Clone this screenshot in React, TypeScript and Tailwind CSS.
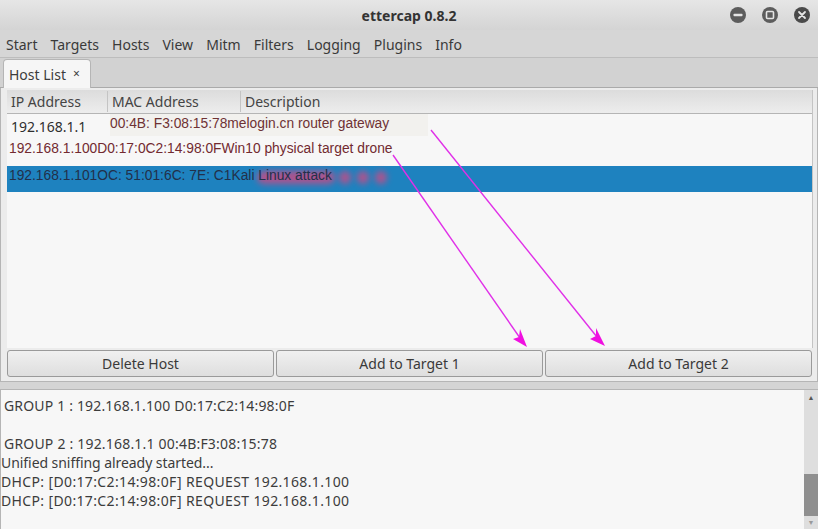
const MENU = ['Start', 'Targets', 'Hosts', 'View', 'Mitm', 'Filters', 'Logging', 'Plugins', 'Info'];

const LOG = [
  { text: 'GROUP 1 : 192.168.1.100 D0:17:C2:14:98:0F', cls: 'pl-[3px] tracking-[0.17px]' },
  { text: '', cls: '' },
  { text: 'GROUP 2 : 192.168.1.1 00:4B:F3:08:15:78', cls: 'pl-[3px] tracking-[0.2px]' },
  { text: 'Unified sniffing already started...', cls: 'tracking-[-0.06px]' },
  { text: 'DHCP: [D0:17:C2:14:98:0F] REQUEST 192.168.1.100', cls: 'tracking-[0.36px]' },
  { text: 'DHCP: [D0:17:C2:14:98:0F] REQUEST 192.168.1.100', cls: 'tracking-[0.36px]' },
];

function WinButton({ kind }: { kind: 'min' | 'max' | 'close' }) {
  return (
    <svg width="16" height="16" viewBox="0 0 16 16">
      <circle cx="8" cy="8" r="8" fill={kind === 'close' ? '#4a4a4a' : '#5c5c5c'} />
      {kind === 'min' && <rect x="3.5" y="6.8" width="9" height="2.4" rx="0.8" fill="#e4e4e4" />}
      {kind === 'max' && <rect x="4.5" y="4.5" width="7" height="7" rx="1" fill="none" stroke="#e4e4e4" strokeWidth="1.6" />}
      {kind === 'close' && <path d="M5 5l6 6M11 5l-6 6" stroke="#e4e4e4" strokeWidth="1.8" strokeLinecap="round" />}
    </svg>
  );
}

function ActionButton({ label }: { label: string }) {
  return (
    <button className="flex-1 h-[27px] rounded-[3px] border border-[#9a9a9a] bg-gradient-to-b from-[#f0f0f0] to-[#dedede] text-[14px] text-[#3a3a3a]">
      {label}
    </button>
  );
}

function Arrows() {
  return (
    <svg className="absolute inset-0 pointer-events-none" width="818" height="529" viewBox="0 0 818 529">
      <line x1="393" y1="155" x2="520" y2="338" stroke="#e030e8" strokeWidth="1.4" />
      <line x1="431" y1="130" x2="597" y2="337" stroke="#e030e8" strokeWidth="1.4" />
      <path d="M527 347L513 339L519 337L520 329Z" fill="#f010e0" />
      <path d="M605 346L590 339L596 336L596 328Z" fill="#f010e0" />
    </svg>
  );
}

export default function App() {
  return (
    <div
      className="relative w-[818px] h-[529px] overflow-hidden flex flex-col bg-[#d6d6d6] text-[#3c3c3c]"
      style={{ fontFamily: '"Noto Sans", sans-serif' }}
    >
      {/* Title bar */}
      <div className="h-[30px] flex items-center justify-end gap-4 pr-[8px] bg-gradient-to-b from-[#e6e6e6] to-[#d4d4d4] relative flex-shrink-0">
        <span className="absolute left-0 right-0 text-center text-[14px] font-bold text-[#333333]">ettercap 0.8.2</span>
        <WinButton kind="min" />
        <WinButton kind="max" />
        <WinButton kind="close" />
      </div>

      {/* Menu */}
      <div className="h-[28px] flex items-center gap-[13.1px] pl-[6px] pt-[2px] text-[14px] text-[#3a3a3a] border-b border-[#bdbdbd] bg-[#d6d6d6] flex-shrink-0">
        {MENU.map((m) => (
          <span key={m}>{m}</span>
        ))}
      </div>

      {/* Tabs */}
      <div className="h-[30px] flex items-end pl-[3px] bg-[#d2d2d2] border-b border-[#aaaaaa] flex-shrink-0">
        <div className="h-[29px] w-[88px] -mb-px flex items-center gap-[7px] pl-[5px] bg-[#f6f6f6] border border-b-0 border-[#b5b5b5] rounded-t-[4px] text-[14px]">
          Host List
          <span className="text-[12px] leading-none">×</span>
        </div>
      </div>

      {/* Host panel */}
      <div className="h-[294px] flex flex-col pl-[6px] pr-[4px] pt-[2px] pb-[4px] bg-[#ececec] border-x border-b border-[#b5b5b5] flex-shrink-0">
        <div className="flex-1 flex flex-col min-h-0 bg-[#f7f7f7] border-r border-[#c4c4c4]">
          <div className="h-[24px] flex items-center text-[14px] text-[#444444] bg-gradient-to-b from-[#dcdcdc] to-[#ededed] border-b border-[#b5b5b5] flex-shrink-0">
            <span className="w-[101px] pl-[4px] border-r border-[#c4c4c4]">IP Address</span>
            <span className="w-[133px] pl-[4px] border-r border-[#c4c4c4]">MAC Address</span>
            <span className="pl-[4px]">Description</span>
          </div>

          <div className="h-[26px] flex items-center">
            <span className="w-[103px] pl-[4px] pb-[2px] text-[14px] text-[#2f2f2f]">192.168.1.1</span>
            <span className="h-[22px] w-[318px] -mt-[5px] flex items-center bg-[#f2f1ee] text-[13.8px] text-[#6e3234]" style={{ fontFamily: '"Liberation Sans", sans-serif' }}>
              00:4B: F3:08:15:78melogin.cn router gateway
            </span>
          </div>

          <div className="h-[26px] flex items-center -mt-[4px] pl-[2px] text-[13.8px] text-[#722a30]" style={{ fontFamily: '"Liberation Sans", sans-serif' }}>
            192.168.1.100D0:17:0C2:14:98:0FWin10 physical target drone
          </div>

          <div className="relative h-[26px] mt-[4px] flex items-center pl-[2px] pb-[5px] bg-[#1e82bf] text-[13.8px] text-[#22304a]" style={{ fontFamily: '"Liberation Sans", sans-serif' }}>
            <span className="absolute left-[250px] top-[5px] w-[78px] h-[13px] rounded-full bg-[#e8407a] opacity-70 blur-[3px]" />
            <span className="absolute left-[332px] top-[5px] w-[12px] h-[13px] rounded-full bg-[#e8407a] opacity-70 blur-[3px]" />
            <span className="absolute left-[350px] top-[5px] w-[12px] h-[13px] rounded-full bg-[#e8407a] opacity-70 blur-[3px]" />
            <span className="absolute left-[368px] top-[5px] w-[12px] h-[13px] rounded-full bg-[#e8407a] opacity-70 blur-[3px]" />
            <span className="relative">192.168.1.101OC: 51:01:6C: 7E: C1Kali Linux attack</span>
          </div>
        </div>

        {/* Buttons */}
        <div className="flex gap-[2px] pt-[2px] pr-px flex-shrink-0">
          <ActionButton label="Delete Host" />
          <ActionButton label="Add to Target 1" />
          <ActionButton label="Add to Target 2" />
        </div>
      </div>

      {/* Pane handle */}
      <div className="h-[8px] bg-[#d4d4d4] border-b border-[#b5b5b5] flex-shrink-0" />

      {/* Log */}
      <div className="flex-1 flex min-h-0 bg-[#f7f7f7] border-l border-[#b5b5b5]">
        <div className="flex-1 pt-[6px] text-[14px] leading-[19px] text-[#3c3c3c]">
          {LOG.map((l, i) => (
            <div key={i} className={`h-[19px] whitespace-pre ${l.cls}`}>
              {l.text}
            </div>
          ))}
        </div>
        <div className="w-[14px] flex flex-col items-center bg-[#dedede] flex-shrink-0">
          <span className="mt-[3px] text-[7px] leading-[10px] text-[#555555]">▲</span>
          <div className="flex-1" />
          <div className="w-full h-[42px] bg-[#8f8f8f]" />
          <span className="h-[13px] text-[7px] leading-[13px] text-[#9a9a9a]">▼</span>
        </div>
      </div>

      <Arrows />
    </div>
  );
}
